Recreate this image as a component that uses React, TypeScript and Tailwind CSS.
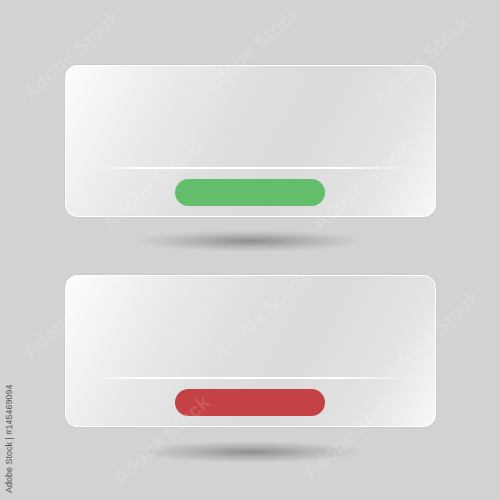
import React from 'react';

type Panel = { bar: string; shadowGap: string };

const panels: Panel[] = [
  { bar: 'bg-[#63bd6b]', shadowGap: 'mt-[13px]' },
  { bar: 'bg-[#c44144]', shadowGap: 'mt-[14px]' },
];

// faint diagonal stamp marks across the page
const stamps = [
  { x: 10, y: 40 },
  { x: 190, y: 35 },
  { x: 360, y: 45 },
  { x: 90, y: 170 },
  { x: 300, y: 170 },
  { x: 10, y: 300 },
  { x: 200, y: 300 },
  { x: 370, y: 320 },
  { x: 100, y: 425 },
  { x: 290, y: 420 },
];

function Card({ bar }: { bar: string }) {
  return (
    <div className="w-[371px] h-[152px] rounded-[12px] border border-white bg-[linear-gradient(118deg,#fdfdfd_0%,#ececec_22%,#dedede_45%,#dbdbdb_62%,#e3e3e3_82%,#f8f8f8_100%)] shadow-[0_0_0_1px_rgba(0,0,0,0.03)] flex flex-col">
      <div className="flex-1" />
      <div className="mx-[26px] h-[2px] bg-[linear-gradient(to_right,transparent,#ffffff_15%,#ffffff_80%,transparent)]" />
      <div className="flex justify-center pt-[10px] pb-[10px]">
        <div className={`w-[150px] h-[27px] rounded-full ${bar}`} />
      </div>
    </div>
  );
}

export default function App() {
  return (
    <div className="relative w-[500px] h-[500px] overflow-hidden bg-[#d2d2d2] font-['Liberation_Sans',sans-serif]">
      <div className="flex flex-col items-center pt-[65px]">
        {panels.map((p, i) => (
          <div key={i} className={`flex flex-col items-center ${i > 0 ? 'mt-[23px]' : ''}`}>
            <Card bar={p.bar} />
            <div className={`${p.shadowGap} w-[230px] h-[22px] bg-[radial-gradient(ellipse_at_center,rgba(0,0,0,0.32)_0%,rgba(0,0,0,0.12)_40%,transparent_70%)]`} />
          </div>
        ))}
      </div>

      {stamps.map((s, i) => (
        <div
          key={i}
          className="absolute text-[20px] font-bold text-white/15 -rotate-[42deg] whitespace-nowrap select-none"
          style={{ left: s.x, top: s.y }}
        >
          Adobe Stock
        </div>
      ))}

      <div className="absolute left-[5px] top-[383px] h-[110px] text-[9px] leading-none text-[#555] whitespace-nowrap [writing-mode:vertical-rl] rotate-180">
        Adobe Stock | #145469094
      </div>
    </div>
  );
}
